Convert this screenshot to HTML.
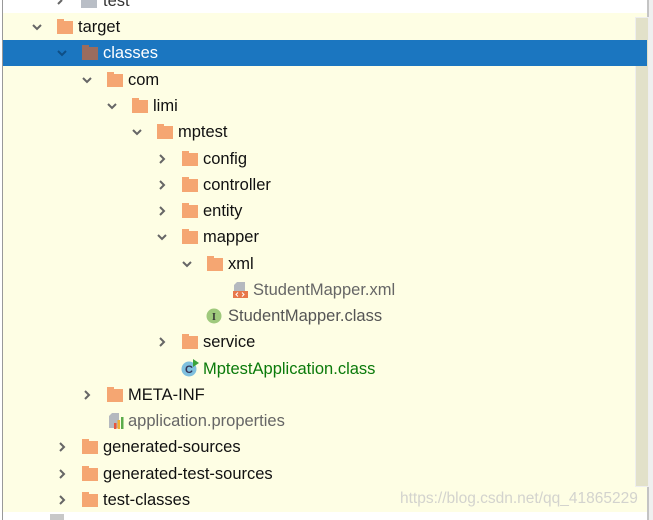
<!DOCTYPE html>
<html><head><meta charset="utf-8"><style>
body{margin:0;width:653px;height:520px;overflow:hidden;background:#fff;position:relative;font-family:"Liberation Sans","Microsoft YaHei",sans-serif;font-size:16.5px;color:#111}
.bg{position:absolute;left:3px;top:13px;width:645px;height:499px;background:#fefee4}
.lb{position:absolute;left:2px;top:0;width:1px;height:520px;background:#999}
.rb{position:absolute;left:647px;top:0;width:2px;height:520px;background:#c4c4c4}
.rb2{position:absolute;left:649px;top:0;width:4px;height:520px;background:#efefef}
.sb{position:absolute;left:635px;top:17px;width:12px;height:468px;background:#e2e1c9;border:1px solid #eee}
.sel{position:absolute;left:3px;top:40px;width:644px;height:26px;background:#1b76c0}
.r{position:absolute;height:26px;line-height:26px;white-space:nowrap;margin-top:1px}
.f{position:absolute;width:16px;height:13px;top:7px;background:#f5a672}
.f:before{content:"";position:absolute;left:0;top:-2px;width:7px;height:3px;background:inherit}
.c{position:absolute;top:7px;width:12px;height:12px}
.t{position:absolute}
</style></head><body>
<div class="bg"></div><div class="lb"></div><div class="rb"></div><div class="rb2"></div>
<div class="sb"></div>
<div class="sel"></div>
<div class="r" style="left:0;top:-13px;width:200px"><svg class="c" style="left:55px" viewBox="0 0 12 12"><path d="M3 9L7 5" stroke="#666" stroke-width="2" fill="none"/></svg><div class="f" style="left:81px;background:#b9bec6"></div><span class="t" style="left:103px;color:#333">test</span></div>

<div class="r" style="top:13px;left:0;width:300px"><svg class="c" style="left:31px" viewBox="0 0 12 12"><path d="M2 4L6 8L10 4" stroke="#666" stroke-width="2" fill="none"/></svg><div class="f" style="left:57px"></div><span class="t" style="left:78px">target</span></div>
<div class="r" style="top:39px;left:0;width:300px"><svg class="c" style="left:56px" viewBox="0 0 12 12"><path d="M2 4L6 8L10 4" stroke="#0e4f86" stroke-width="2" fill="none"/></svg><div class="f" style="left:82px;background:#9a6c5e"></div><span class="t" style="left:103px;color:#fff">classes</span></div>
<div class="r" style="top:66px;left:0;width:300px"><svg class="c" style="left:81px" viewBox="0 0 12 12"><path d="M2 4L6 8L10 4" stroke="#666" stroke-width="2" fill="none"/></svg><div class="f" style="left:107px"></div><span class="t" style="left:128px">com</span></div>
<div class="r" style="top:92px;left:0;width:300px"><svg class="c" style="left:106px" viewBox="0 0 12 12"><path d="M2 4L6 8L10 4" stroke="#666" stroke-width="2" fill="none"/></svg><div class="f" style="left:132px"></div><span class="t" style="left:153px">limi</span></div>
<div class="r" style="top:118px;left:0;width:300px"><svg class="c" style="left:131px" viewBox="0 0 12 12"><path d="M2 4L6 8L10 4" stroke="#666" stroke-width="2" fill="none"/></svg><div class="f" style="left:157px"></div><span class="t" style="left:178px">mptest</span></div>
<div class="r" style="top:145px;left:0;width:300px"><svg class="c" style="left:156px" viewBox="0 0 12 12"><path d="M4 2L8 6L4 10" stroke="#666" stroke-width="2" fill="none"/></svg><div class="f" style="left:182px"></div><span class="t" style="left:203px">config</span></div>
<div class="r" style="top:171px;left:0;width:300px"><svg class="c" style="left:156px" viewBox="0 0 12 12"><path d="M4 2L8 6L4 10" stroke="#666" stroke-width="2" fill="none"/></svg><div class="f" style="left:182px"></div><span class="t" style="left:203px">controller</span></div>
<div class="r" style="top:197px;left:0;width:300px"><svg class="c" style="left:156px" viewBox="0 0 12 12"><path d="M4 2L8 6L4 10" stroke="#666" stroke-width="2" fill="none"/></svg><div class="f" style="left:182px"></div><span class="t" style="left:203px">entity</span></div>
<div class="r" style="top:223px;left:0;width:300px"><svg class="c" style="left:156px" viewBox="0 0 12 12"><path d="M2 4L6 8L10 4" stroke="#666" stroke-width="2" fill="none"/></svg><div class="f" style="left:182px"></div><span class="t" style="left:203px">mapper</span></div>
<div class="r" style="top:250px;left:0;width:300px"><svg class="c" style="left:181px" viewBox="0 0 12 12"><path d="M2 4L6 8L10 4" stroke="#666" stroke-width="2" fill="none"/></svg><div class="f" style="left:207px"></div><span class="t" style="left:228px">xml</span></div>
<div class="r" style="top:276px;left:0;width:450px"><svg style="position:absolute;left:231px;top:4px" width="18" height="18" viewBox="0 0 18 18"><path d="M6 1H14V10H3V4Z" fill="#b5b9bf"/><rect x="2" y="10" width="15" height="7" fill="#e8774a"/><path d="M7 11.5L5 13.5L7 15.5M11 11.5L13 13.5L11 15.5" stroke="#fff" stroke-width="1" fill="none"/></svg><span class="t" style="left:253px;color:#666">StudentMapper.xml</span></div>
<div class="r" style="top:302px;left:0;width:450px"><svg style="position:absolute;left:206px;top:5px" width="16" height="16" viewBox="0 0 16 16"><circle cx="8" cy="8" r="7.5" fill="#9fc97c"/><text x="8" y="12" font-size="10" font-weight="bold" text-anchor="middle" fill="#333" font-family="Liberation Serif,serif">I</text></svg><span class="t" style="left:228px;color:#555">StudentMapper.class</span></div>
<div class="r" style="top:328px;left:0;width:300px"><svg class="c" style="left:156px" viewBox="0 0 12 12"><path d="M4 2L8 6L4 10" stroke="#666" stroke-width="2" fill="none"/></svg><div class="f" style="left:182px"></div><span class="t" style="left:203px">service</span></div>
<div class="r" style="top:355px;left:0;width:450px"><svg style="position:absolute;left:181px;top:3px" width="20" height="18" viewBox="0 0 20 18"><circle cx="8" cy="10" r="7.5" fill="#7fc0de"/><text x="8" y="14" font-size="11" font-weight="bold" text-anchor="middle" fill="#335" font-family="Liberation Sans,sans-serif">C</text><path d="M12 0L18 4L12 8Z" fill="#3aa33a"/></svg><span class="t" style="left:203px;color:#0a7a0a">MptestApplication.class</span></div>
<div class="r" style="top:381px;left:0;width:300px"><svg class="c" style="left:81px" viewBox="0 0 12 12"><path d="M4 2L8 6L4 10" stroke="#666" stroke-width="2" fill="none"/></svg><div class="f" style="left:107px"></div><span class="t" style="left:128px">META-INF</span></div>
<div class="r" style="top:407px;left:0;width:350px"><svg style="position:absolute;left:108px;top:4px" width="18" height="18" viewBox="0 0 18 18"><path d="M4 1H11V16H1V4Z" fill="#b5b9bf"/><rect x="6" y="11" width="2.5" height="6" fill="#e8553a"/><rect x="9.5" y="8" width="2.5" height="9" fill="#f0b030"/><rect x="13" y="5" width="2.5" height="12" fill="#5aab4a"/></svg><span class="t" style="left:128px;color:#666">application.properties</span></div>
<div class="r" style="top:433px;left:0;width:300px"><svg class="c" style="left:56px" viewBox="0 0 12 12"><path d="M4 2L8 6L4 10" stroke="#666" stroke-width="2" fill="none"/></svg><div class="f" style="left:82px"></div><span class="t" style="left:103px">generated-sources</span></div>
<div class="r" style="top:460px;left:0;width:300px"><svg class="c" style="left:56px" viewBox="0 0 12 12"><path d="M4 2L8 6L4 10" stroke="#666" stroke-width="2" fill="none"/></svg><div class="f" style="left:82px"></div><span class="t" style="left:103px">generated-test-sources</span></div>
<div class="r" style="top:486px;left:0;width:300px"><svg class="c" style="left:56px" viewBox="0 0 12 12"><path d="M4 2L8 6L4 10" stroke="#666" stroke-width="2" fill="none"/></svg><div class="f" style="left:82px"></div><span class="t" style="left:103px">test-classes</span></div>
<div style="position:absolute;left:400px;top:490px;font-size:15.5px;color:rgba(200,200,200,0.8);white-space:nowrap">https://blog.csdn.net/qq_41865229</div>
<div style="position:absolute;left:50px;top:514px;width:14px;height:6px;background:#c8c8c8"></div>
</body></html>
